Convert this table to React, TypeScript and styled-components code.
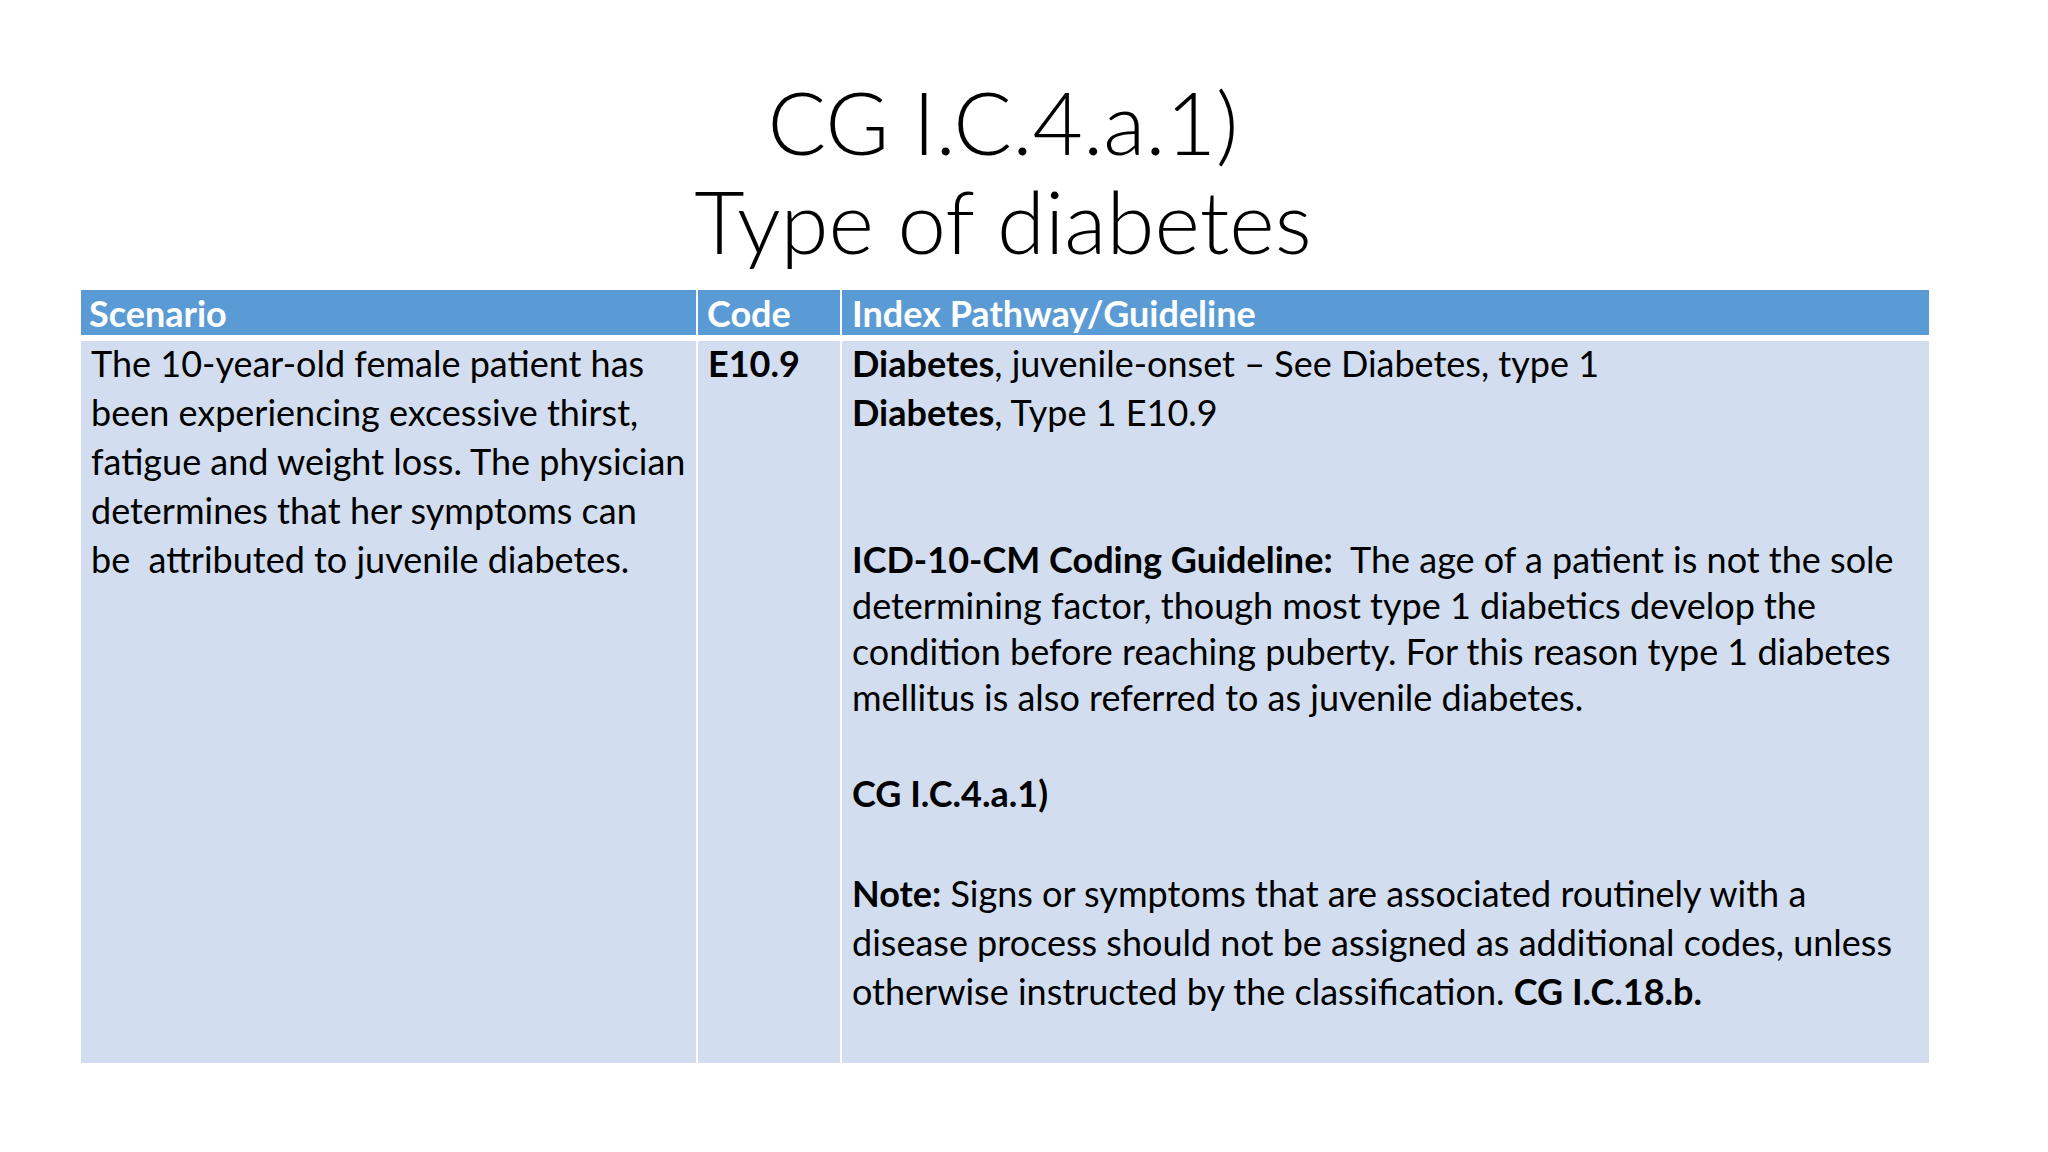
import React from "react";
import styled, { createGlobalStyle } from "styled-components";

const GlobalStyle = createGlobalStyle`
  html, body {
    margin: 0;
    padding: 0;
    background: #ffffff;
  }
  body {
    font-family: "Lato", "Liberation Sans", sans-serif;
    color: #000000;
  }
`;

const Slide = styled.div`
  width: 2048px;
  height: 1152px;
  display: flex;
  flex-direction: column;
  align-items: stretch;
  box-sizing: border-box;
  padding-top: 72px;
  overflow: hidden;
`;

const Title = styled.h1`
  margin: 0;
  width: 2006px;
  text-align: center;
  font-family: "Lato", sans-serif;
  font-weight: 300;
  font-size: 87px;
  line-height: 99px;
  color: #000;
`;

const Table = styled.div`
  margin: 20px 0 0 81px;
  width: 1848px;
  display: grid;
  grid-template-columns: 615px 142px 1087px;
  grid-template-rows: 45px 722px;
  column-gap: 2px;
  row-gap: 6px;
`;

const HeadCell = styled.div<{ $pad: number }>`
  box-sizing: border-box;
  background: #5b9bd5;
  color: #ffffff;
  font-family: "Lato", sans-serif;
  font-weight: 700;
  font-size: 36px;
  line-height: 40px;
  padding: 3px 0 0 ${(p) => p.$pad}px;
  white-space: nowrap;
`;

const BodyCell = styled.div<{ $pad: number }>`
  background: #d2deef;
  padding-left: ${(p) => p.$pad}px;
  font-family: "Lato", sans-serif;
  font-size: 36px;
  line-height: 49px;
`;

const Para = styled.p<{ $lh?: number; $top?: number }>`
  margin: ${(p) => p.$top ?? 0}px 0 0 0;
  line-height: ${(p) => p.$lh ?? 49}px;
  white-space: nowrap;
  &:first-child {
    margin-top: -2px;
  }
`;

const B = styled.b`
  font-weight: 700;
`;

export default function App() {
  return (
    <>
      <GlobalStyle />
      <Slide>
        <Title>
          CG I.C.4.a.1)
          <br />
          Type of diabetes
        </Title>
        <Table>
          <HeadCell $pad={8}>Scenario</HeadCell>
          <HeadCell $pad={9}>Code</HeadCell>
          <HeadCell $pad={10}>Index Pathway/Guideline</HeadCell>

          <BodyCell $pad={10}>
            <Para>
              The 10-year-old female patient has
              <br />
              been experiencing excessive thirst,
              <br />
              fatigue and weight loss. The physician
              <br />
              determines that her symptoms can
              <br />
              be{"\u00a0 "}attributed to juvenile diabetes.
            </Para>
          </BodyCell>

          <BodyCell $pad={10}>
            <Para>
              <B>E10.9</B>
            </Para>
          </BodyCell>

          <BodyCell $pad={10}>
            <Para>
              <B>Diabetes</B>, juvenile-onset – See Diabetes, type 1
            </Para>
            <Para>
              <B>Diabetes</B>, Type 1 E10.9
            </Para>
            <Para $lh={46} $top={99}>
              <B>ICD-10-CM Coding Guideline:</B>
              {"\u00a0 "}The age of a patient is not the sole
              <br />
              determining factor, though most type 1 diabetics develop the
              <br />
              condition before reaching puberty. For this reason type 1 diabetes
              <br />
              mellitus is also referred to as juvenile diabetes.
            </Para>
            <Para $top={49}>
              <B>CG I.C.4.a.1)</B>
            </Para>
            <Para $top={51} $lh={49}>
              <B>Note:</B> Signs or symptoms that are associated routinely with a
              <br />
              disease process should not be assigned as additional codes, unless
              <br />
              otherwise instructed by the classification. <B>CG I.C.18.b.</B>
            </Para>
          </BodyCell>
        </Table>
      </Slide>
    </>
  );
}
